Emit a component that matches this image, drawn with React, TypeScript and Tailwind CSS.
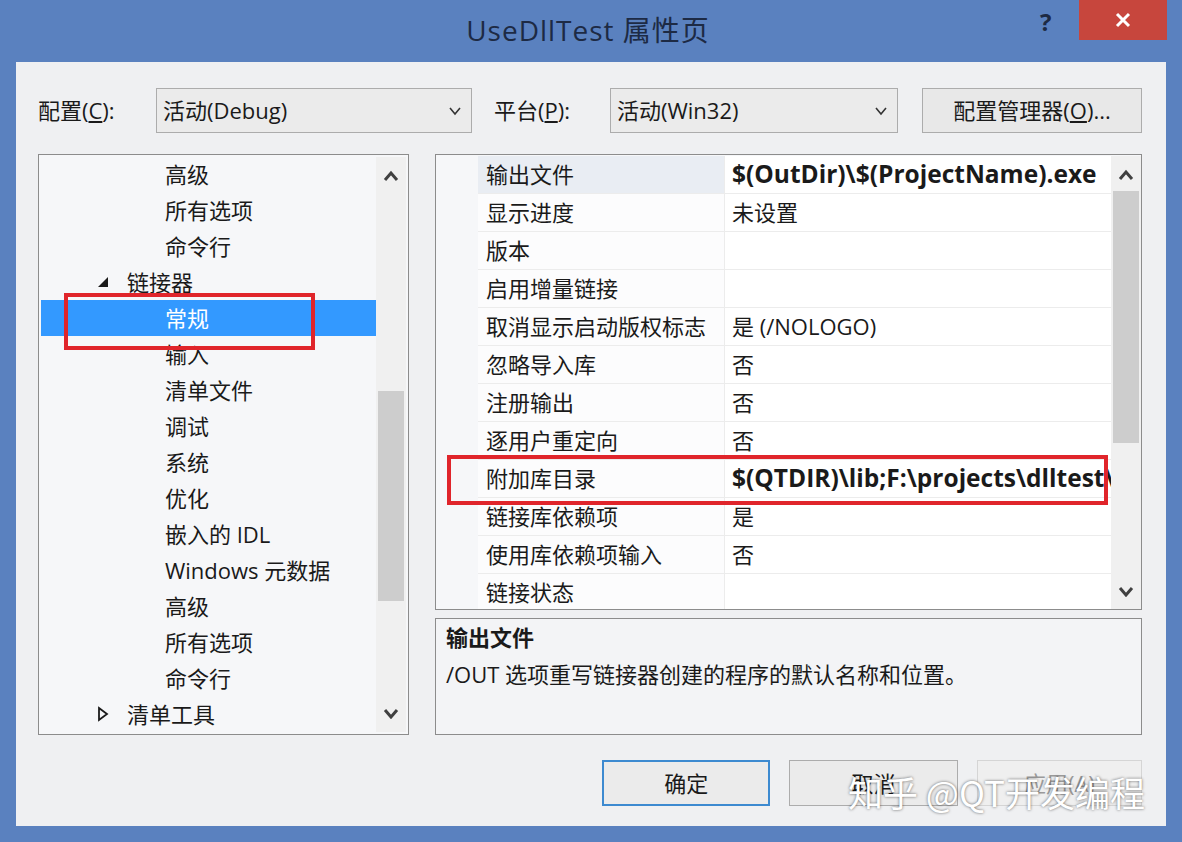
import React from "react";

const FONT = "font-['Segoe_UI','Open_Sans','Noto_Sans_CJK_SC',sans-serif]";

const TREE = [
  { t: "高级", lv: 2 },
  { t: "所有选项", lv: 2 },
  { t: "命令行", lv: 2 },
  { t: "链接器", lv: 1, open: true },
  { t: "常规", lv: 2, sel: true },
  { t: "输入", lv: 2 },
  { t: "清单文件", lv: 2 },
  { t: "调试", lv: 2 },
  { t: "系统", lv: 2 },
  { t: "优化", lv: 2 },
  { t: "嵌入的 IDL", lv: 2 },
  { t: "Windows 元数据", lv: 2 },
  { t: "高级", lv: 2 },
  { t: "所有选项", lv: 2 },
  { t: "命令行", lv: 2 },
  { t: "清单工具", lv: 1, closed: true },
];

const PROPS: { k: string; v: string; bold?: boolean; sel?: boolean }[] = [
  { k: "输出文件", v: "$(OutDir)\\$(ProjectName).exe", bold: true, sel: true },
  { k: "显示进度", v: "未设置" },
  { k: "版本", v: "" },
  { k: "启用增量链接", v: "" },
  { k: "取消显示启动版权标志", v: "是 (/NOLOGO)" },
  { k: "忽略导入库", v: "否" },
  { k: "注册输出", v: "否" },
  { k: "逐用户重定向", v: "否" },
  { k: "附加库目录", v: "$(QTDIR)\\lib;F:\\projects\\dlltest\\Debug", bold: true },
  { k: "链接库依赖项", v: "是" },
  { k: "使用库依赖项输入", v: "否" },
  { k: "链接状态", v: "" },
];

function Chevron({ up }: { up?: boolean }) {
  return (
    <svg width="16" height="12" viewBox="0 0 16 12">
      <path
        d={up ? "M2 10 L8 3 L14 10" : "M2 3 L8 10 L14 3"}
        fill="none"
        stroke="#404040"
        strokeWidth="3"
      />
    </svg>
  );
}

function Combo({ text, w }: { text: string; w: string }) {
  return (
    <div
      className={`${w} h-[45px] flex items-center justify-between border border-[#acacac] bg-[#ebebeb] pl-[6px] pr-[10px] text-[22px] text-[#1a1a1a]`}
    >
      <span>{text}</span>
      <svg width="12" height="10" viewBox="0 0 12 10">
        <path d="M1 2 L6 8 L11 2" fill="none" stroke="#333" strokeWidth="1.6" />
      </svg>
    </div>
  );
}

function Scrollbar({ thumbTop, thumbH, h }: { thumbTop: number; thumbH: number; h: string }) {
  return (
    <div className={`w-[30px] ${h} flex flex-col items-center bg-[#f0f0f0] shrink-0`}>
      <div className="h-[38px] w-full flex items-center justify-center">
        <Chevron up />
      </div>
      <div className="flex-1 w-full relative">
        <div
          className="absolute left-[2px] right-[2px] bg-[#cdcdcd]"
          style={{ top: thumbTop, height: thumbH }}
        />
      </div>
      <div className="h-[38px] w-full flex items-center justify-center">
        <Chevron />
      </div>
    </div>
  );
}

export default function App() {
  return (
    <div className={`w-[1182px] h-[842px] bg-[#5a81bf] flex flex-col relative overflow-hidden ${FONT}`}>
      {/* title bar */}
      <div className="h-[62px] relative flex items-center justify-center shrink-0">
        <span className="text-[28px] text-[#1d2a44] tracking-[1px] -mt-[2px] -ml-[6px]">UseDllTest 属性页</span>
        <span className="absolute left-[1040px] top-[4px] text-[24px] font-bold text-[#1d2a44]">?</span>
        <div className="absolute left-[1079px] top-0 w-[88px] h-[40px] bg-[#c7463d] flex items-center justify-center">
          <svg width="18" height="18" viewBox="0 0 18 18">
            <path d="M3 3 L15 15 M15 3 L3 15" stroke="#fff" strokeWidth="3" />
          </svg>
        </div>
      </div>

      {/* body */}
      <div className="mx-[16px] h-[764px] bg-[#eff0f2] flex flex-col pl-[22px] pr-[24px] pt-[26px]">
        {/* top row */}
        <div className="flex items-center text-[22px] text-[#1a1a1a]">
          <span className="w-[118px]">
            配置(<span className="underline">C</span>):
          </span>
          <Combo text="活动(Debug)" w="w-[316px]" />
          <span className="ml-[22px] w-[116px]">
            平台(<span className="underline">P</span>):
          </span>
          <Combo text="活动(Win32)" w="w-[288px]" />
          <div className="ml-[24px] w-[220px] h-[45px] border border-[#acacac] bg-[#e8e8e8] flex items-center justify-center">
            配置管理器(<span className="underline">O</span>)...
          </div>
        </div>

        {/* middle */}
        <div className="flex mt-[21px] h-[581px]">
          {/* tree */}
          <div className="w-[371px] h-full border border-[#8c8c8c] bg-[#f6f7f9] flex p-[2px]">
            <div className="flex-1 flex flex-col -mt-[1px] text-[22px] text-[#1a1a1a]">
              {TREE.map((n, i) => (
                <div
                  key={i}
                  className={`h-[36px] flex items-center shrink-0 ${n.sel ? "bg-[#3399ff] text-white" : ""}`}
                >
                  {n.lv === 1 ? (
                    <>
                      <span className="w-[70px] flex justify-end pr-[2px]">
                        {n.open ? (
                          <svg width="12" height="12" viewBox="0 0 12 12">
                            <path d="M11 1 L11 11 L1 11 Z" fill="#1a1a1a" />
                          </svg>
                        ) : (
                          <svg width="12" height="16" viewBox="0 0 12 16">
                            <path d="M2 2 L10 8 L2 14 Z" fill="none" stroke="#1a1a1a" strokeWidth="1.8" />
                          </svg>
                        )}
                      </span>
                      <span className="ml-[16px]">{n.t}</span>
                    </>
                  ) : (
                    <span className="ml-[124px] whitespace-nowrap">{n.t}</span>
                  )}
                </div>
              ))}
            </div>
            <Scrollbar thumbTop={196} thumbH={210} h="h-full" />
          </div>

          {/* right */}
          <div className="ml-[26px] w-[707px] flex flex-col">
            <div className="h-[456px] border border-[#8c8c8c] bg-[#f6f7f9] flex pl-[42px] pt-[1px] overflow-hidden">
              <div className="flex-1 flex flex-col text-[22px] text-[#1a1a1a] overflow-hidden">
                {PROPS.map((p, i) => (
                  <div key={i} className="h-[38px] flex shrink-0 border-b border-[#ececec]">
                    <div
                      className={`w-[247px] pl-[8px] flex items-center whitespace-nowrap border-r border-[#ececec] ${p.sel ? "bg-[#e9edf3]" : "bg-[#fcfcfd]"}`}
                    >
                      {p.k}
                    </div>
                    <div
                      className={`flex-1 pl-[7px] flex items-center whitespace-nowrap overflow-hidden bg-white ${p.bold ? "font-bold text-[24.5px] font-['Open_Sans','Noto_Sans_CJK_SC',sans-serif]" : ""}`}
                    >
                      {p.v}
                    </div>
                  </div>
                ))}
              </div>
              <Scrollbar thumbTop={-3} thumbH={252} h="h-[454px]" />
            </div>
            <div className="mt-[8px] h-[117px] border border-[#8c8c8c] bg-[#f3f4f6] px-[10px] pt-[2px] text-[22px] text-[#1a1a1a]">
              <div className="font-bold">输出文件</div>
              <div className="mt-[4px]">/OUT 选项重写链接器创建的程序的默认名称和位置。</div>
            </div>
          </div>
        </div>

        {/* buttons */}
        <div className="flex mt-[25px] ml-[564px] gap-[19px] text-[22px]">
          <div className="w-[171px] h-[46px] border-2 border-[#3d8ad0] bg-[#ebebeb] flex items-center justify-center text-[#1a1a1a]">
            确定
          </div>
          <div className="w-[171px] h-[46px] border border-[#acacac] bg-[#ebebeb] flex items-center justify-center text-[#1a1a1a]">
            取消
          </div>
          <div className="w-[168px] h-[46px] border border-[#d5d5d5] bg-[#efefef] flex items-center justify-center text-[#9a9a9a]">
            应用(A)
          </div>
        </div>
      </div>

      {/* annotation boxes */}
      <div className="absolute left-[64px] top-[293px] w-[251px] h-[57px] border-[4px] border-[#e0252b]" />
      <div className="absolute left-[447px] top-[455px] w-[661px] h-[50px] border-[4px] border-[#e0252b]" />

      {/* watermark */}
      <div className="absolute left-[848px] top-[766px] text-[35px] text-white font-['Noto_Sans_CJK_SC',sans-serif] [text-shadow:0_0_3px_rgba(0,0,0,0.6)] whitespace-nowrap">
        知乎 @QT开发编程
      </div>
    </div>
  );
}
